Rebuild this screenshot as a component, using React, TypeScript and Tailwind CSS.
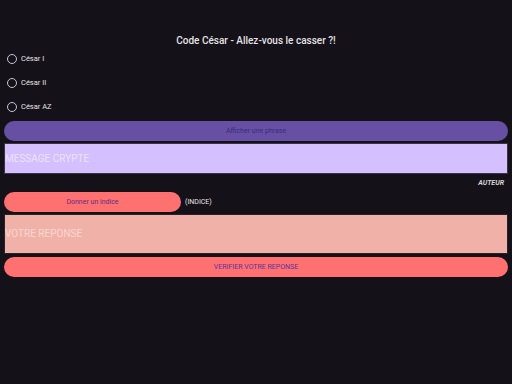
import React from "react";

function Radio({ label }: { label: string }) {
  return (
    <div className="flex items-center h-[24px] pl-[3px] gap-[4px]">
      <span className="w-[10px] h-[10px] rounded-full border-[1.5px] border-[#cac4d0] box-border" />
      <span className="text-[7.5px] text-[#e6e1e5] leading-none">{label}</span>
    </div>
  );
}

export default function App() {
  return (
    <div
      className="w-[512px] h-[384px] bg-[#141218] flex flex-col px-[4px] overflow-hidden"
      style={{ fontFamily: "Roboto, 'Noto Sans', sans-serif" }}
    >
      <div className="pt-[34px] h-[47px] text-center text-[10px] font-medium text-[#e6e1e5] leading-[13px]">
        Code César - Allez-vous le casser ?!
      </div>
      <Radio label="César I" />
      <Radio label="César II" />
      <Radio label="César AZ" />
      <div className="mt-[2px] h-[20px] rounded-full bg-[#6750a4] flex items-center justify-center text-[7px] text-[#3c2a7a]">
        Afficher une phrase
      </div>
      <div className="mt-[2px] h-[31px] bg-[#d4bfff] border border-[#3a3346] flex items-center text-[10px] text-[#ece2ff] leading-none">
        MESSAGE CRYPTE
      </div>
      <div className="h-[18px] flex items-center justify-end pr-[4px] text-[7px] italic font-bold text-[#d8d4dc]">
        AUTEUR
      </div>
      <div className="flex items-center gap-[4px] h-[20px]">
        <div className="w-[177px] h-[20px] rounded-full bg-[#ff7070] flex items-center justify-center text-[7px] text-[#5e2f80]">
          Donner un indice
        </div>
        <span className="text-[7px] text-[#e6e1e5]">(INDICE)</span>
      </div>
      <div className="mt-[2px] h-[40px] bg-[#f0b2a8] border border-[#2a2226] flex items-center text-[10px] text-[#f8d6d1] leading-none">
        VOTRE REPONSE
      </div>
      <div className="mt-[3px] h-[20px] rounded-full bg-[#ff7070] flex items-center justify-center text-[7px] text-[#5b34a0]">
        VERIFIER VOTRE REPONSE
      </div>
    </div>
  );
}
